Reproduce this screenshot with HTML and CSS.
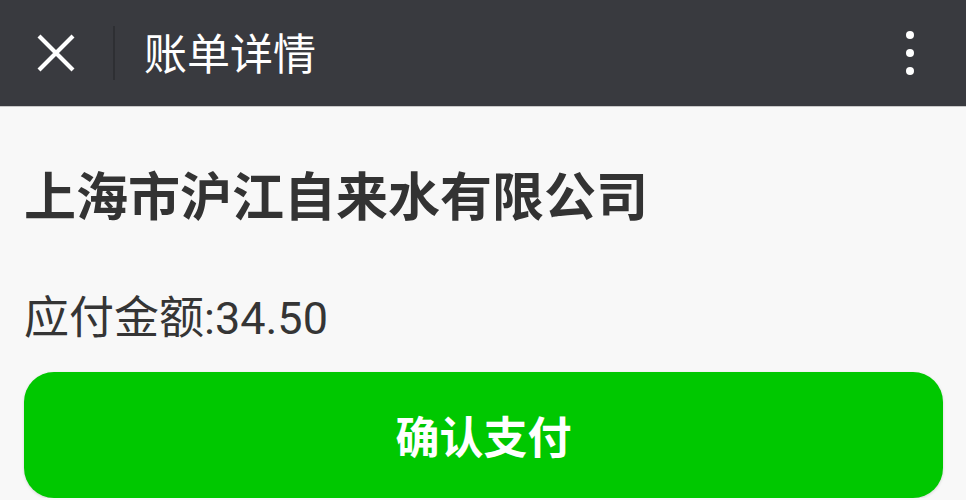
FILE: index.html
```html
<!DOCTYPE html>
<html lang="zh-CN">
<head>
<meta charset="utf-8">
<title>账单详情</title>
<link rel="stylesheet" href="styles.css">
</head>
<body>
<header class="topbar">
  <div class="close">
    <svg width="38" height="38" viewBox="0 0 38 38"><path d="M2 2 L36 36 M36 2 L2 36" stroke="#fff" stroke-width="4.2" stroke-linecap="butt"/></svg>
  </div>
  <div class="divider"></div>
  <h1 class="title">账单详情</h1>
  <div class="more">
    <span class="dot"></span><span class="dot"></span><span class="dot"></span>
  </div>
</header>
<main class="content">
  <h2 class="company">上海市沪江自来水有限公司</h2>
  <p class="amount">应付金额:34.50</p>
  <button class="pay">确认支付</button>
</main>
</body>
</html>
```
FILE: styles.css
```css
html, body {
  margin: 0;
  padding: 0;
  background: #f8f8f8;
  font-family: Roboto, "Noto Sans CJK SC", sans-serif;
}
.topbar {
  height: 106px;
  background: #393a3f;
  display: flex;
  align-items: center;
  border-bottom: 1px solid #c8c8c8;
}
.close {
  width: 38px;
  height: 38px;
  margin-left: 37px;
  display: flex;
}
.divider {
  width: 2px;
  height: 54px;
  background: #2e2f33;
  margin-left: 38px;
}
.title {
  margin: 0 0 0 29px;
  color: #fff;
  font-family: "Noto Sans CJK SC", sans-serif;
  font-weight: 400;
  font-size: 43px;
  line-height: 1;
  flex: 1;
  padding-bottom: 4px;
}
.more {
  display: flex;
  flex-direction: column;
  gap: 10px;
  margin-right: 52px;
}
.dot {
  width: 8px;
  height: 8px;
  border-radius: 50%;
  background: #fff;
}
.content {
  padding: 0 23px 0 24px;
}
.company {
  margin: 0;
  padding-top: 54px;
  font-family: "Noto Sans CJK SC", sans-serif;
  font-weight: 700;
  font-size: 52px;
  line-height: 66px;
  color: #333;
}
.amount {
  margin: 0;
  padding-top: 67px;
  font-size: 45px;
  line-height: 50px;
  color: #353535;
}
.pay {
  display: block;
  width: 100%;
  height: 126px;
  margin-top: 28px;
  border: none;
  border-radius: 30px;
  background: #00c800;
  color: #fff;
  font-family: "Noto Sans CJK SC", sans-serif;
  font-weight: 700;
  font-size: 44px;
  box-shadow: 0 1px 3px rgba(0,0,0,0.15);
}
```
